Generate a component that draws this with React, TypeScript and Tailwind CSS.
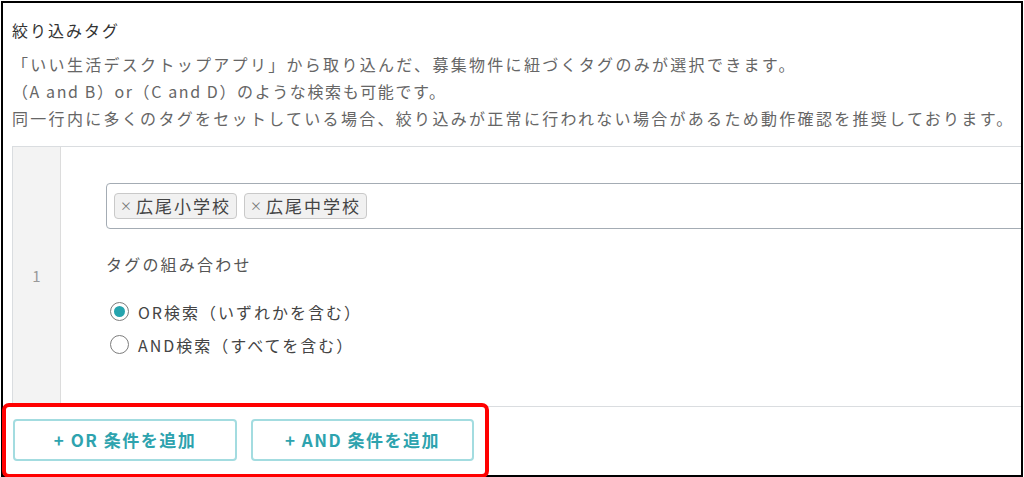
import { useState } from "react";

const font = "font-['Noto_Sans_CJK_JP','Noto_Sans',sans-serif]";

const Chip = ({ label }: { label: string }) => (
  <span className="flex h-[26px] items-center rounded-[4px] border border-[#c9c9c9] bg-[#f1f1f1] pl-[5px] pr-[5px] text-[17px] tracking-[2px] text-[#444]">
    <span className="mr-[2px] text-[12px] text-[#777]">×</span>
    {label}
  </span>
);

const Radio = ({ checked, label, onClick }: { checked: boolean; label: string; onClick: () => void }) => (
  <button onClick={onClick} className="flex h-[33px] items-center gap-[9px] text-left">
    <span className="flex h-[19px] w-[19px] items-center justify-center rounded-full border-[1.5px] border-[#7d7d7d] bg-white">
      {checked && <span className="h-[11px] w-[11px] rounded-full bg-[#26a4ae]" />}
    </span>
    <span className="text-[16px] tracking-[2px] text-[#444]">{label}</span>
  </button>
);

export default function App() {
  const [mode, setMode] = useState<"or" | "and">("or");

  return (
    <div className={`relative h-[477px] w-[1024px] bg-white ${font}`}>
      <div className="ml-[1px] mt-[1px] flex h-[476px] w-[1022px] flex-col overflow-hidden border-2 border-black bg-white pl-[9px] pt-[13px]">
        {/* Header */}
        <h2 className="text-[16px] leading-[28px] tracking-[2px] text-[#333]">絞り込みタグ</h2>
        <div className="mt-[7px] text-[16px] leading-[27px] tracking-[2.3px] text-[#666]">
          <p>「いい生活デスクトップアプリ」から取り込んだ、募集物件に紐づくタグのみが選択できます。</p>
          <p className="tracking-[1.6px]">（A and B）or（C and D）のような検索も可能です。</p>
          <p>同一行内に多くのタグをセットしている場合、絞り込みが正常に行われない場合があるため動作確認を推奨しております。</p>
        </div>

        {/* Condition table */}
        <div className="mt-[14px] flex w-[1100px] shrink-0 border border-[#dadde0]">
          <div className="flex w-[48px] items-center justify-center border-r border-[#dcdcdc] bg-[#f3f3f3] text-[15px] text-[#999]">
            1
          </div>
          <div className="flex-1 pb-[45px] pl-[45px] pr-[40px] pt-[36px]">
            <div className="flex h-[46px] items-center gap-[7px] rounded-[4px] border border-[#a4acb4] px-[7px]">
              <Chip label="広尾小学校" />
              <Chip label="広尾中学校" />
            </div>
            <p className="mt-[21px] text-[16px] leading-[28px] tracking-[2.2px] text-[#555]">タグの組み合わせ</p>
            <div className="mt-[17px] flex flex-col pl-[4px]">
              <Radio checked={mode === "or"} label="OR検索（いずれかを含む）" onClick={() => setMode("or")} />
              <Radio checked={mode === "and"} label="AND検索（すべてを含む）" onClick={() => setMode("and")} />
            </div>
          </div>
        </div>

        {/* Add buttons */}
        <div className="mt-[12px] flex gap-[14px] pl-[1px]">
          <button className="h-[42px] w-[224px] rounded-[4px] border-2 border-[#a3dce0] bg-white text-[17px] font-bold tracking-[1.5px] text-[#2ea3ae]">
            + OR 条件を追加
          </button>
          <button className="h-[42px] w-[223px] rounded-[4px] border-2 border-[#a3dce0] bg-white text-[17px] font-bold tracking-[1.5px] text-[#2ea3ae]">
            + AND 条件を追加
          </button>
        </div>
      </div>

      {/* Highlight */}
      <div className="pointer-events-none absolute left-[2px] top-[402px] h-[75px] w-[487px] rounded-[7px] border-4 border-[#ff0000]" />
    </div>
  );
}
